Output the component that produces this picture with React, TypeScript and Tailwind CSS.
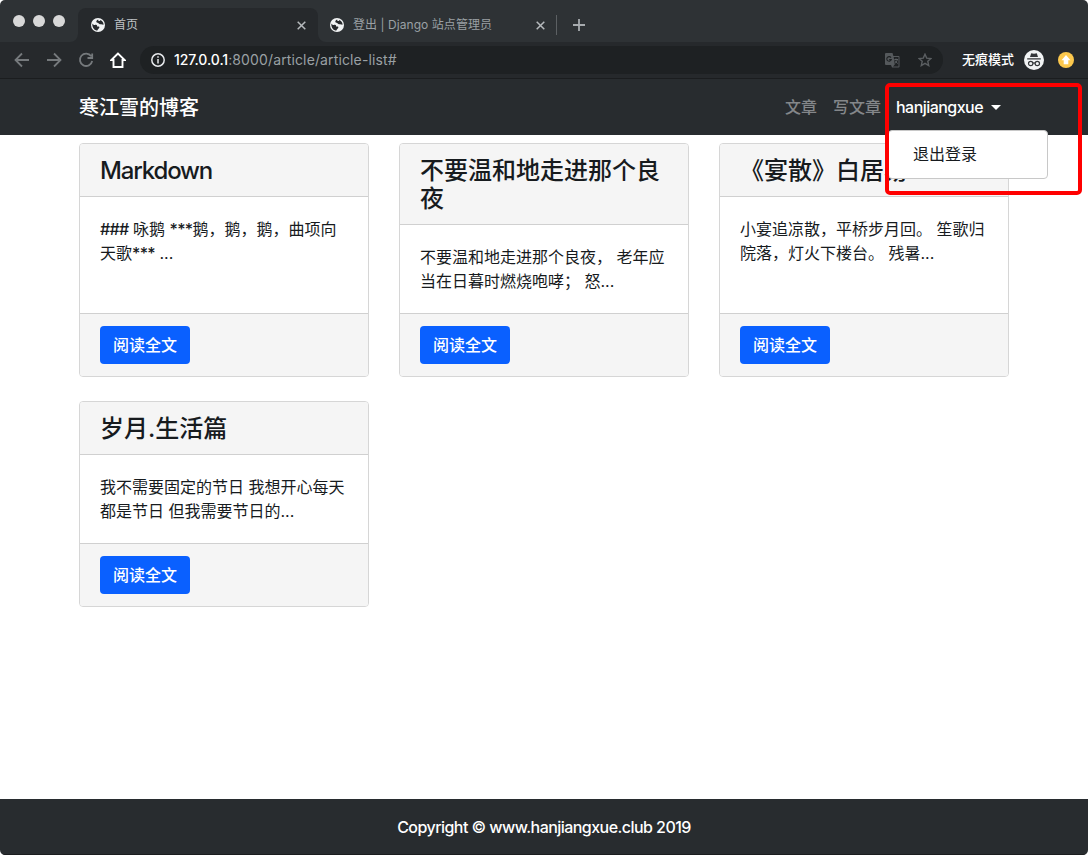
import React from "react";

const Globe = () => (
  <svg className="size-[14px] shrink-0" viewBox="0 0 14 14">
    <circle cx="7" cy="7" r="7" fill="#f1f3f4" />
    <path d="M1.3 5.4C2 6.6 3.2 7.2 4.6 6.8C5.8 6.6 6.4 7.4 6 8.4C7.2 8.6 8.4 8.2 8.4 9.2C8.4 10.4 6.8 10.6 6.4 12.5C3.4 12.4 1 9.6 1.3 5.4Z M7.2 1.4C5.6 2 5 3 5.4 4.2C6.4 4.8 7.6 4.8 8 5.8C9 6.8 10.8 6.2 12.6 6.8C12.6 4.4 11 2.6 9.4 2C9.2 3 8.2 3.4 7.4 2.8Z" fill="#26292c" />
  </svg>
);

const Close = () => (
  <svg className="size-[9px] shrink-0" viewBox="0 0 9 9" stroke="#b6babd" strokeWidth="1.5">
    <path d="M0.7 0.7 8.3 8.3M8.3 0.7 0.7 8.3" />
  </svg>
);

const NavIcon = ({ d, color }: { d: string; color: string }) => (
  <svg className="size-4 shrink-0" viewBox="0 0 16 16" fill="none" stroke={color} strokeWidth="1.8">
    <path d={d} />
  </svg>
);

function TabStrip() {
  return (
    <div className="flex h-[42px] bg-[#2e3235]">
      <div className="flex w-[78px] gap-2 pl-[13px] pt-[15px]">
        <span className="size-3 rounded-full bg-[#d8d8d8]" />
        <span className="size-3 rounded-full bg-[#d8d8d8]" />
        <span className="size-3 rounded-full bg-[#d8d8d8]" />
      </div>
      <div className="relative mt-2 flex h-[34px] w-[240px] items-center rounded-t-[8px] bg-[#26292c] pl-[13px] pr-[12px] text-[12px] text-[#bfc3c6]">
        <svg className="absolute -left-2 bottom-0 size-2" viewBox="0 0 8 8"><path d="M8 0V8H0A8 8 0 0 0 8 0Z" fill="#26292c" /></svg>
        <svg className="absolute -right-2 bottom-0 size-2" viewBox="0 0 8 8"><path d="M0 0V8H8A8 8 0 0 1 0 0Z" fill="#26292c" /></svg>
        <Globe />
        <span className="ml-[9px] flex-1">首页</span>
        <Close />
      </div>
      <div className="mt-2 flex h-[34px] w-[238px] items-center pl-3 pr-[11px] text-[12px] text-[#9aa0a4]">
        <Globe />
        <span className="ml-[9px] flex-1 whitespace-nowrap tracking-[0.06px]">登出 | Django 站点管理员</span>
        <Close />
      </div>
      <div className="mt-[15px] h-5 w-px bg-[#5c6063]" />
      <svg className="ml-4 mt-[19px] size-3" viewBox="0 0 12 12" stroke="#a7abae" strokeWidth="1.8"><path d="M6 0V12M0 6H12" /></svg>
    </div>
  );
}

function Toolbar() {
  return (
    <div className="flex h-9 items-center bg-[#26292c] pl-[14px]">
      <div className="flex gap-4">
        <NavIcon color="#75797c" d="M15 8H2M8 1.5 1.5 8 8 14.5" />
        <NavIcon color="#75797c" d="M1 8H14M8 1.5 14.5 8 8 14.5" />
        <NavIcon color="#75797c" d="M13.2 4.2A6.2 6.2 0 1 0 14.2 9M14.2 1.5V6H9.5" />
        <svg className="size-4" viewBox="0 0 16 16" fill="none" stroke="#fff" strokeWidth="1.9"><path d="M8 1.5 1.3 8H3.5V15H12.5V8H14.7Z" /></svg>
      </div>
      <div className="ml-[14px] flex h-7 w-[803px] items-center rounded-full bg-[#1e2123] pl-[11px] pr-[11px]">
        <svg className="size-[14px]" viewBox="0 0 14 14" fill="none" stroke="#e8eaed" strokeWidth="1.5"><circle cx="7" cy="7" r="6.2" /><path d="M7 6V10.6M7 3.2V4.8" /></svg>
        <span className="ml-[9px] flex-1 whitespace-nowrap pb-px text-[14px] tracking-[0.13px] text-[#9aa0a4]">
          <span className="font-medium tracking-[-0.05px] text-white">127.0.0.1</span>:8000/article/article-list#
        </span>
        <svg className="mr-[18px] size-[15px]" viewBox="0 0 15 15"><path d="M1 0H7.5L8.4 3H13.5A1 1 0 0 1 14.5 4V13.5A1 1 0 0 1 13.5 14.5H7L6 12H1A1 1 0 0 1 0 11V1A1 1 0 0 1 1 0Z" fill="#55595c" /><path d="M8.7 4H13.5V13.5H8L9.8 11.5Z" fill="#1e2123" /><path d="M6 4.6A2.3 2.3 0 1 0 6.3 6.6H4.2" fill="none" stroke="#1e2123" strokeWidth="1.1" /><path d="M9.3 6.5H13M11 5.5V6.5M12.3 6.5C12 8.3 11 9.5 10 10.3M10 7.6 12.6 10.6" fill="none" stroke="#62666a" strokeWidth="0.9" /></svg>
        <svg className="size-[14px]" viewBox="0 0 14 14" fill="none" stroke="#5b5f62" strokeWidth="1.4"><path d="M7 1.2 8.7 5.1 13 5.5 9.8 8.3 10.7 12.5 7 10.3 3.3 12.5 4.2 8.3 1 5.5 5.3 5.1Z" /></svg>
      </div>
      <span className="ml-[19px] w-[53px] whitespace-nowrap text-[13px] font-medium text-white">无痕模式</span>
      <svg className="ml-[9px] size-5" viewBox="0 0 20 20"><circle cx="10" cy="10" r="10" fill="#f1f3f4" /><path d="M6 7 7.2 3.2 10 3.8 12.8 3.2 14 7Z" fill="#34373a" /><path d="M3.2 8.8H16.8" stroke="#34373a" strokeWidth="1.3" /><g fill="none" stroke="#34373a" strokeWidth="1.2"><circle cx="6.7" cy="13.5" r="2.2" /><circle cx="13.3" cy="13.5" r="2.2" /><path d="M8.9 13.2Q10 12.4 11.1 13.2" /></g></svg>
      <svg className="ml-[14px] size-4" viewBox="0 0 16 16"><circle cx="8" cy="8" r="8" fill="#fcc84d" /><path d="M8 3 12.5 8.2H10.3V12.3H5.7V8.2H3.5Z" fill="#fff" /></svg>
    </div>
  );
}

const Caret = () => (
  <svg className="ml-[7px] h-[5px] w-[10px]" viewBox="0 0 10 5"><path d="M0 0H10L5 5Z" fill="#fff" /></svg>
);

function Navbar() {
  return (
    <nav className="flex h-14 items-center bg-[#282c2f] pl-[79px] text-[16px]">
      <a className="w-[705px] pt-0.5 text-[20px] font-medium text-white">寒江雪的博客</a>
      <a className="w-12 pl-px font-medium text-[#84878a]">文章</a>
      <a className="w-16 pl-px font-medium text-[#84878a]">写文章</a>
      <div className="relative flex items-center text-white">
        <span className="w-[88px] font-medium tracking-[-0.54px]">hanjiangxue</span>
        <Caret />
        <div className="absolute left-[-8px] top-[35px] z-10 flex h-[49px] w-[160px] items-center rounded-[4px] border border-[#c8c8c8] bg-white pb-px pl-6 text-[#171b1e]">
          退出登录
        </div>
        <div className="absolute left-[-11px] top-[-12px] z-20 h-[112px] w-[197px] rounded-[5px] border-4 border-[#ff0000]" />
      </div>
    </nav>
  );
}

const Marks = ({ children }: { children: string }) => <span className="font-medium tracking-[-0.7px]">{children}</span>;

const articles: { title: React.ReactNode; lines: React.ReactNode[] }[] = [
  {
    title: <span className="tracking-[-1.15px]">Markdown</span>,
    lines: [
      <><Marks>###</Marks> 咏鹅 <Marks>***</Marks>鹅，鹅，鹅，曲项向</>,
      <>天歌<Marks>***</Marks> ...</>,
    ],
  },
  { title: "不要温和地走进那个良夜", lines: ["不要温和地走进那个良夜， 老年应", "当在日暮时燃烧咆哮； 怒..."] },
  { title: "《宴散》白居易", lines: ["小宴追凉散，平桥步月回。 笙歌归", "院落，灯火下楼台。 残暑..."] },
  { title: "岁月.生活篇", lines: ["我不需要固定的节日 我想开心每天", "都是节日 但我需要节日的..."] },
];

function Card({ title, lines }: { title: React.ReactNode; lines: React.ReactNode[] }) {
  return (
    <article className="flex flex-col overflow-hidden rounded-[4px] border border-[#d6d6d6] bg-white">
      <h4 className="border-b border-[#d0d0d0] bg-[#f5f5f5] px-5 pb-[11px] pt-[13px] text-[24px] font-medium leading-7">{title}</h4>
      <div className="flex-1 p-5 text-[16px] leading-6">
        {lines.map((line, i) => (
          <p key={i} className="whitespace-nowrap">{line}</p>
        ))}
      </div>
      <div className="border-t border-[#d0d0d0] bg-[#f5f5f5] px-5 py-3">
        <button className="h-[38px] w-[90px] rounded-[4px] bg-[#0a60ff] text-[16px] font-medium text-white">阅读全文</button>
      </div>
    </article>
  );
}

export default function App() {
  return (
    <div className="flex h-[855px] w-[1088px] flex-col overflow-hidden rounded-[5px] bg-white font-['Inter','Noto_Sans_CJK_SC',sans-serif] text-[#171b1e]">
      <TabStrip />
      <Toolbar />
      <div className="h-px bg-[#1b1d1f]" />
      <Navbar />
      <main className="grid flex-1 grid-cols-[290px_290px_290px] content-start gap-x-[30px] gap-y-6 pl-[79px] pt-2">
        {articles.map((a, i) => (
          <Card key={i} {...a} />
        ))}
      </main>
      <footer className="flex h-14 items-center justify-center border-b border-[#1b1d1f] bg-[#282c2f] pt-px text-[16px] font-medium text-white">
        <span className="tracking-[-0.55px]">Copyright © www.hanjiangxue.club 2019</span>
      </footer>
    </div>
  );
}
